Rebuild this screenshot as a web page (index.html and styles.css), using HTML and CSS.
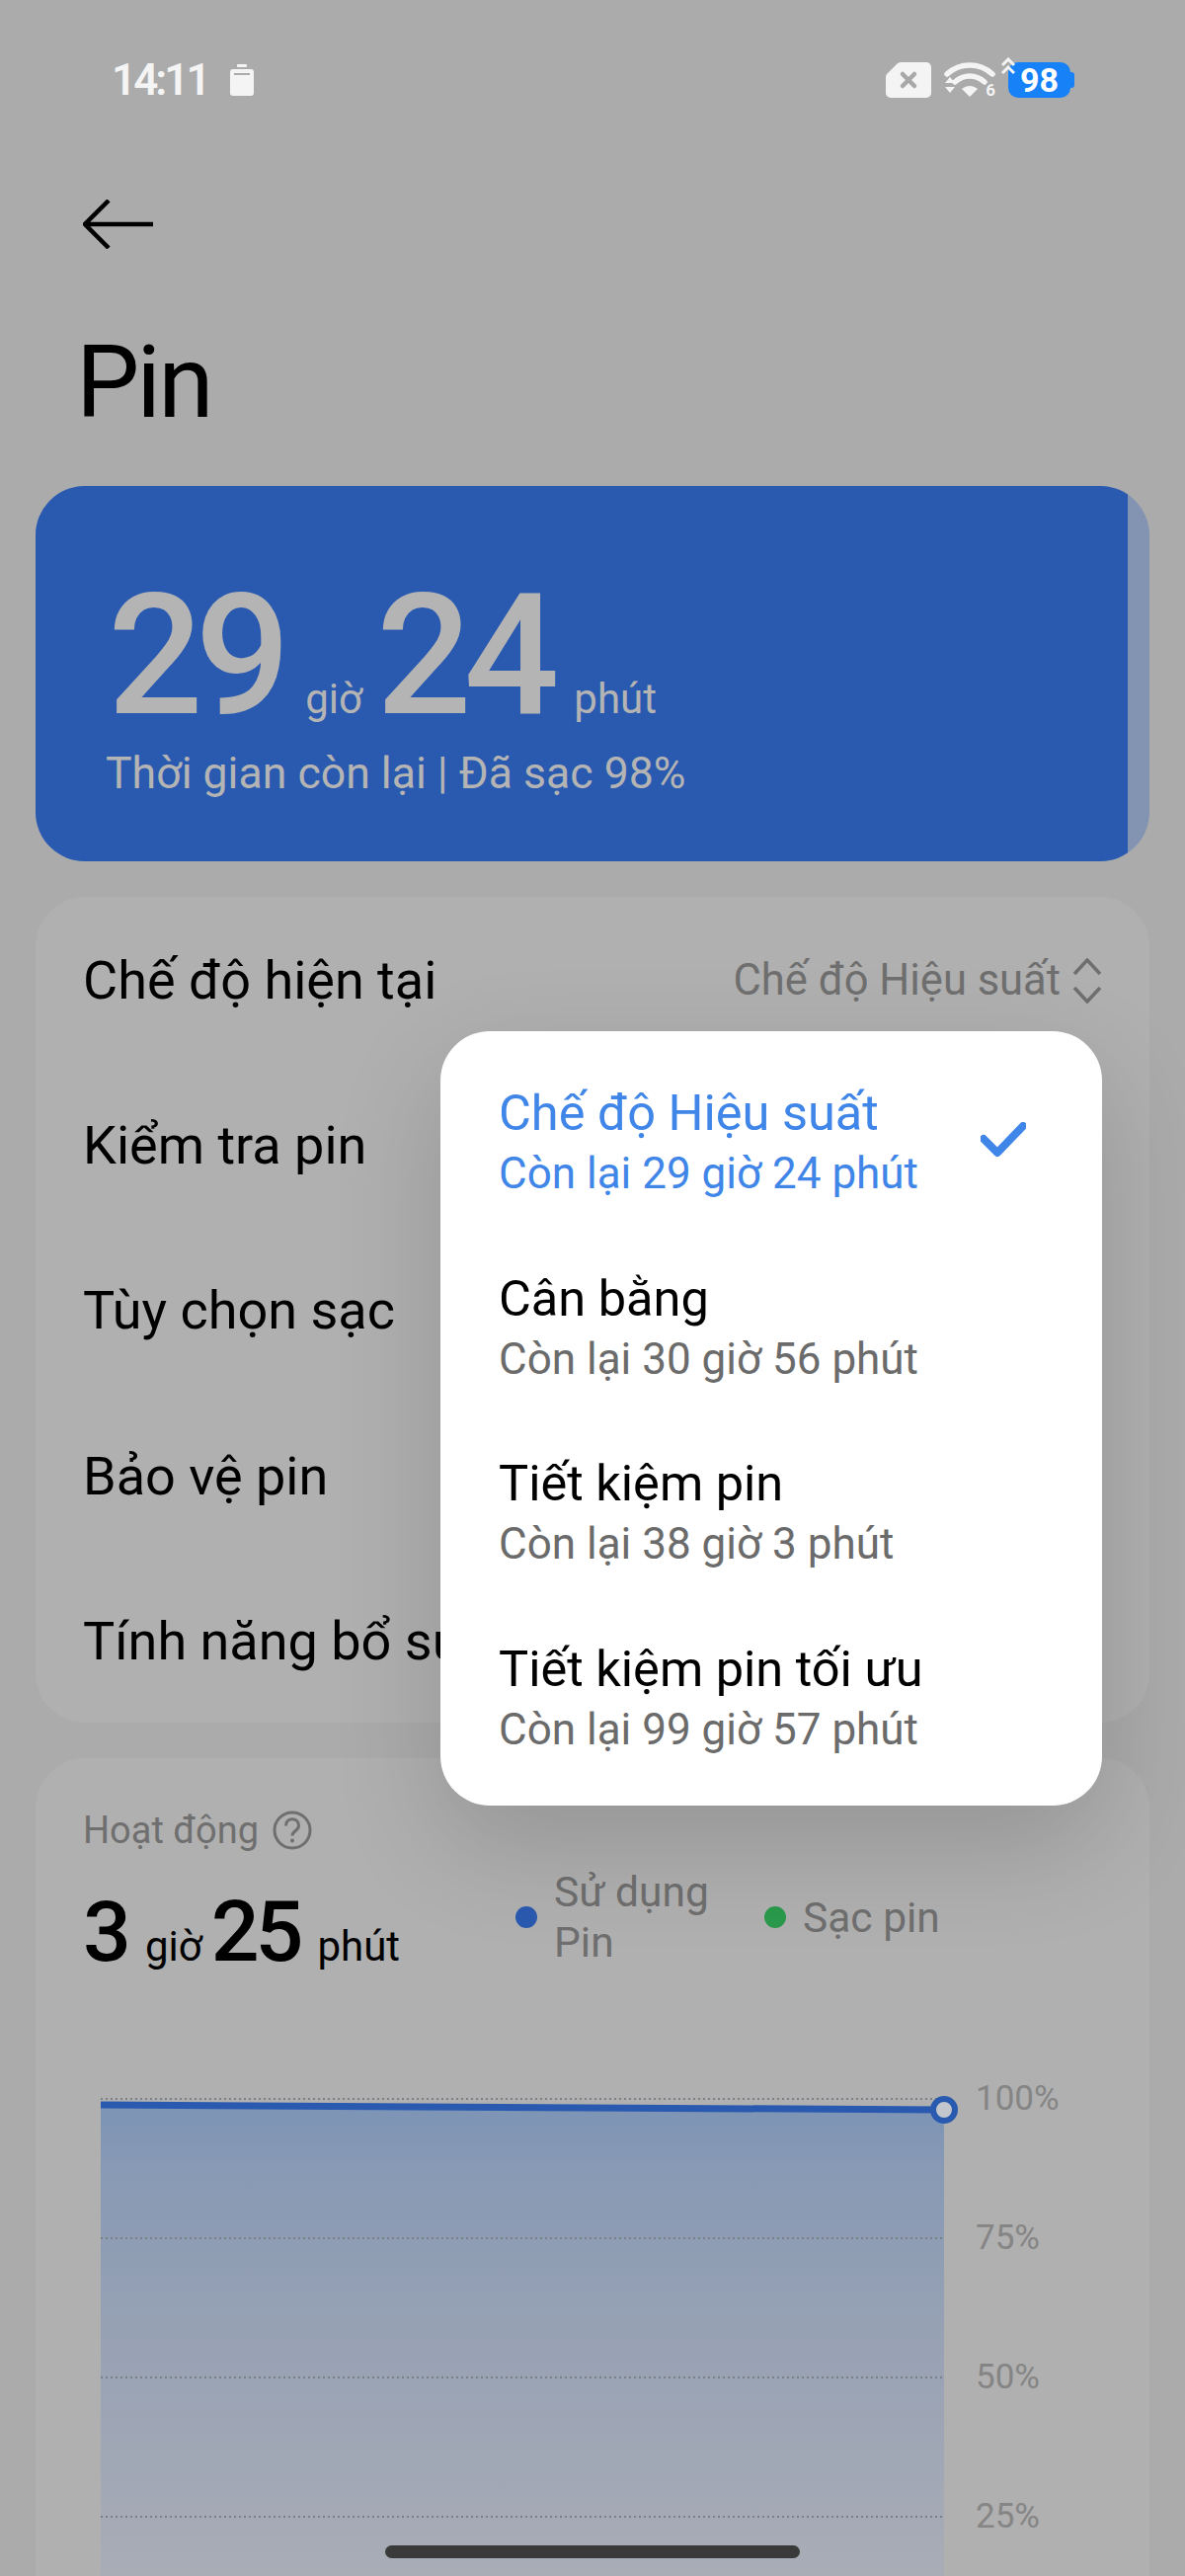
FILE: index.html
```html
<!DOCTYPE html>
<html lang="vi">
<head>
    <title>Pin</title>
    <meta charset="utf-8">
    <link rel="stylesheet" href="styles.css">
</head>
<body>
    <div class="screen">

        <div class="status">
            <div class="status-left">
                <span class="clock">14:11</span>
                <svg class="saver" width="26" height="32" viewBox="0 0 26 32">
                    <rect x="8" y="0" width="10" height="3" rx="1" fill="#f4f4f4"/>
                    <path d="M4 5h18a3 3 0 0 1 3 3v21a3 3 0 0 1-3 3H4a3 3 0 0 1-3-3V8a3 3 0 0 1 3-3z" fill="#f4f4f4"/>
                    <rect x="5" y="9" width="16" height="2" fill="#ababab"/>
                </svg>
            </div>
            <div class="status-right">
                <svg width="46" height="36" viewBox="0 0 46 36">
                    <path d="M15 0h26a5 5 0 0 1 5 5v26a5 5 0 0 1-5 5H5a5 5 0 0 1-5-5V15a5 5 0 0 1 1.500-3.500L11.500 1.500A5 5 0 0 1 15 0z" fill="#f4f4f4"/>
                    <path d="M17 12l12 12M29 12L17 24" stroke="#a8a8a8" stroke-width="4.5" stroke-linecap="round"/>
                </svg>
                <div class="wifi">
                    <svg width="52" height="36" viewBox="0 0 52 36">
                        <path d="M3 12C16 0 36 0 49 12" fill="none" stroke="#f4f4f4" stroke-width="5.5" stroke-linecap="round"/>
                        <path d="M11 20c9-8 21-8 30 0" fill="none" stroke="#f4f4f4" stroke-width="5.5" stroke-linecap="round"/>
                        <path d="M18 27c5-4 11-4 16 0l-8 8z" fill="#f4f4f4"/>
                        <path d="M1 21l5-6 5 6zM1 25l5 6 5-6z" fill="#f4f4f4"/>
                    </svg>
                    <span class="wifi-six">6</span>
                </div>
                <div class="battery">
                    <span>98</span>
                    <svg class="bolt" width="14" height="19" viewBox="0 0 14 19">
                        <path d="M1 8l6-6 6 6M1 16l6-6 6 6" fill="none" stroke="#f4f4f4" stroke-width="3"/>
                    </svg>
                </div>
            </div>
        </div>

        <svg class="back" width="72" height="50" viewBox="0 0 72 50">
            <path d="M26 1L2 25l24 24M2 25h69" fill="none" stroke="#000" stroke-width="4.5"/>
        </svg>

        <h1 class="title">Pin</h1>

        <div class="hero">
            <div class="hero-fill">
                <div class="hero-time">
                    <span class="big">29</span><span class="unit">giờ</span>
                    <span class="big">24</span><span class="unit">phút</span>
                </div>
                <div class="hero-sub">Thời gian còn lại | Đã sạc 98%</div>
            </div>
        </div>

        <div class="card rows">
            <div class="row">
                <span>Chế độ hiện tại</span>
                <span class="row-value">
                    Chế độ Hiệu suất
                    <svg width="30" height="46" viewBox="0 0 30 46">
                        <path d="M2 16L15 2l13 14M2 30l13 14 13-14" fill="none" stroke="#6f6f6f" stroke-width="3.5"/>
                    </svg>
                </span>
            </div>
            <div class="row">Kiểm tra pin</div>
            <div class="row">Tùy chọn sạc</div>
            <div class="row">Bảo vệ pin</div>
            <div class="row">Tính năng bổ sung</div>
        </div>

        <div class="card activity">
            <div class="activity-label">
                Hoạt động
                <svg width="40" height="40" viewBox="0 0 40 40">
                    <circle cx="20" cy="20" r="18" fill="none" stroke="#6f6f6f" stroke-width="3"/>
                    <path d="M13.500 15.500c0-9 13-9 13 0 0 5-6.500 5-6.500 10" fill="none" stroke="#6f6f6f" stroke-width="3"/>
                    <circle cx="20" cy="30.500" r="2" fill="#6f6f6f"/>
                </svg>
            </div>
            <div class="activity-head">
                <div class="activity-time">
                    <span class="mid">3</span><span class="small">giờ</span>
                    <span class="mid">25</span><span class="small">phút</span>
                </div>
                <div class="legend">
                    <div class="legend-item use"><i class="dot dot-blue"></i><span>Sử dụng<br>Pin</span></div>
                    <div class="legend-item"><i class="dot dot-green"></i><span>Sạc pin</span></div>
                </div>
            </div>
            <div class="chart">
                <svg class="plot" width="870" height="500" viewBox="0 0 870 500">
                    <defs>
                        <linearGradient id="fade" x1="0" y1="0" x2="0" y2="1">
                            <stop offset="0" stop-color="#7c94b6"/>
                            <stop offset="0.12" stop-color="#8799b4"/>
                            <stop offset="0.5" stop-color="#98a2b4"/>
                            <stop offset="1" stop-color="#a9adb6"/>
                        </linearGradient>
                    </defs>
                    <path d="M0 12L854 17V500H0z" fill="url(#fade)"/>
                    <g stroke="#7b8088" stroke-width="2" stroke-dasharray="2 3">
                        <path d="M0 6H854M0 147H854M0 288H854M0 429H854"/>
                    </g>
                    <path d="M0 12L854 17" stroke="#2a5ab0" stroke-width="7"/>
                    <circle cx="854" cy="17" r="11" fill="#c2c6cd" stroke="#2a5ab0" stroke-width="6"/>
                </svg>
                <div class="chart-labels">
                    <span>100%</span>
                    <span>75%</span>
                    <span>50%</span>
                    <span>25%</span>
                </div>
            </div>
        </div>

        <div class="menu">
            <div class="menu-item active">
                <div>
                    <div class="menu-title">Chế độ Hiệu suất</div>
                    <div class="menu-sub">Còn lại 29 giờ 24 phút</div>
                </div>
                <svg class="check" width="46" height="36" viewBox="0 0 46 36">
                    <path d="M3 17l14 14L43 4" fill="none" stroke="#3f86e8" stroke-width="8" stroke-linecap="round" stroke-linejoin="round"/>
                </svg>
            </div>
            <div class="menu-item">
                <div>
                    <div class="menu-title">Cân bằng</div>
                    <div class="menu-sub">Còn lại 30 giờ 56 phút</div>
                </div>
            </div>
            <div class="menu-item">
                <div>
                    <div class="menu-title">Tiết kiệm pin</div>
                    <div class="menu-sub">Còn lại 38 giờ 3 phút</div>
                </div>
            </div>
            <div class="menu-item">
                <div>
                    <div class="menu-title">Tiết kiệm pin tối ưu</div>
                    <div class="menu-sub">Còn lại 99 giờ 57 phút</div>
                </div>
            </div>
        </div>

        <div class="home-bar"></div>
    </div>
</body>
</html>
```

FILE: styles.css
```css
body {
    margin: 0;
}
.screen {
    position: relative;
    width: 1200px;
    height: 2608px;
    overflow: hidden;
    background: #ababab;
    font-family: Roboto, "Noto Sans", sans-serif;
    color: #000;
}

/* status bar */
.status {
    height: 162px;
    display: flex;
    justify-content: space-between;
    align-items: center;
    padding: 0 113px;
    box-sizing: border-box;
}
.status-left {
    display: flex;
    align-items: center;
    gap: 21px;
}
.clock {
    font-size: 44px;
    font-weight: 600;
    color: #f4f4f4;
    letter-spacing: -3px;
}
.status-right {
    display: flex;
    align-items: center;
    gap: 13px;
    margin-right: -1px;
}
.wifi {
    position: relative;
    width: 52px;
    height: 36px;
}
.wifi svg {
    display: block;
}
.wifi-six {
    position: absolute;
    right: 0;
    bottom: 0;
    font-size: 17px;
    font-weight: 700;
    line-height: 15px;
    color: #f4f4f4;
}
.battery {
    position: relative;
    width: 63px;
    height: 36px;
    margin-right: 4px;
    background: #1782f8;
    border-radius: 10px;
    color: #fff;
    font-size: 34px;
    font-weight: 700;
    line-height: 36px;
    text-align: center;
}
.battery::after {
    content: "";
    position: absolute;
    right: -4px;
    top: 10px;
    width: 4px;
    height: 16px;
    border-radius: 0 3px 3px 0;
    background: #1782f8;
}
.bolt {
    position: absolute;
    left: -7px;
    top: -5px;
}

/* header */
.back {
    display: block;
    margin: 40px 0 0 84px;
}
.title {
    margin: 75px 0 0 77px;
    font-size: 102px;
    font-weight: 400;
    line-height: 120px;
    letter-spacing: -3px;
}

/* blue summary */
.hero {
    margin: 45px 36px 0;
    height: 380px;
    border-radius: 50px;
    background: #8393b2;
    overflow: hidden;
}
.hero-fill {
    width: 1106px;
    height: 100%;
    box-sizing: border-box;
    padding: 90px 0 0 73px;
    background: #2a5ab0;
    color: #b4b4b4;
}
.hero-time {
    display: flex;
    align-items: baseline;
    height: 165px;
}
.big {
    font-size: 170px;
    font-weight: 500;
    line-height: 165px;
    letter-spacing: -8px;
    margin-right: 23px;
}
.unit {
    font-size: 42px;
    margin-right: 14px;
}
.hero-sub {
    font-size: 44.600px;
    line-height: 56px;
    margin: 8px 0 0 -2px;
}

/* cards */
.card {
    margin: 36px 36px 0;
    border-radius: 50px;
    background: #b0b0b0;
}
.rows {
    height: 836px;
    padding-top: 1px;
    box-sizing: border-box;
}
.row {
    height: 167.200px;
    padding: 0 48px;
    box-sizing: border-box;
    display: flex;
    align-items: center;
    justify-content: space-between;
    font-size: 54px;
    white-space: nowrap;
}
.row-value {
    display: flex;
    align-items: center;
    gap: 12px;
    font-size: 43.500px;
    color: #6f6f6f;
}

/* activity card */
.activity {
    height: 900px;
    padding: 50px 48px 0;
    box-sizing: border-box;
}
.activity-label {
    display: flex;
    align-items: center;
    gap: 14px;
    font-size: 38px;
    line-height: 46px;
    color: #6f6f6f;
}
.activity-head {
    display: flex;
    margin-top: 12px;
    height: 124px;
}
.activity-time {
    width: 438px;
    display: flex;
    align-items: baseline;
    padding-top: 23px;
}
.mid {
    font-size: 86px;
    font-weight: 500;
    line-height: 90px;
    letter-spacing: -4px;
    margin-right: 18px;
}
.small {
    font-size: 42px;
    margin-right: 9px;
}
.legend {
    display: flex;
    align-items: center;
    font-size: 42.500px;
    line-height: 51px;
    color: #6f6f6f;
    height: 102px;
    margin-top: 2px;
}
.legend-item {
    display: flex;
    align-items: center;
    gap: 17px;
}
.legend-item.use {
    width: 252px;
}
.dot {
    display: block;
    width: 22px;
    height: 22px;
    border-radius: 50%;
}
.dot-blue {
    background: #2a5ab0;
}
.dot-green {
    background: #2a9a4c;
}
.chart {
    display: flex;
    margin: 107px 0 0 18px;
}
.plot {
    display: block;
    flex: none;
}
.chart-labels {
    display: flex;
    flex-direction: column;
    margin: -24px 0 0 16px;
    font-size: 35px;
    line-height: 60px;
    color: #858585;
}
.chart-labels span {
    height: 141px;
}

/* popup menu, sits over the list */
.menu {
    position: absolute;
    left: 446px;
    top: 1044px;
    width: 670px;
    height: 784px;
    box-sizing: border-box;
    padding: 30px 59px 0;
    background: #fff;
    border-radius: 50px;
    box-shadow: 0 40px 110px rgba(0, 0, 0, 0.16);
}
.menu-item {
    height: 187.500px;
    display: flex;
    justify-content: space-between;
    align-items: flex-start;
}
.menu-title {
    font-size: 50.500px;
    line-height: 62px;
    margin-top: 22px;
}
.menu-sub {
    font-size: 44px;
    line-height: 52px;
    margin-top: 4px;
    color: #6b6b6b;
}
.active .menu-title,
.active .menu-sub {
    color: #3f86e8;
}
.check {
    margin: 62px 18px 0 0;
}

.home-bar {
    position: absolute;
    left: 390px;
    top: 2577px;
    width: 420px;
    height: 13px;
    border-radius: 7px;
    background: #3a3a3a;
}
```
